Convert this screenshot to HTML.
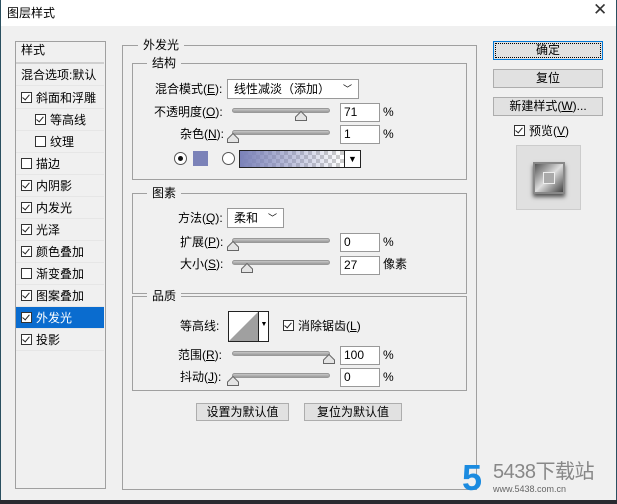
<!DOCTYPE html>
<html><head><meta charset="utf-8"><style>
*{margin:0;padding:0;box-sizing:border-box}
body{width:617px;height:504px;position:relative;overflow:hidden;background:#f0f0f0;font-family:"Liberation Sans","Noto Sans CJK SC",sans-serif;font-size:12px;color:#000}
.a{position:absolute;white-space:nowrap;line-height:14px}
.box{position:absolute;border:1px solid #a0a0a0}
.lg{position:absolute;background:#f0f0f0;padding:0 5px;line-height:14px}
.cb{display:inline-block;width:11px;height:11px;border:1px solid #333;background:#fff;vertical-align:-1px;margin-right:4px;position:relative}
.cb.k::after{content:"";position:absolute;left:2px;top:0px;width:3px;height:6px;border:solid #222;border-width:0 1.5px 1.5px 0;transform:rotate(40deg)}
.row{position:absolute;left:16px;width:88px;height:22px;line-height:22px;border-bottom:1px solid #e6e6e6;padding-left:5px}
.btn{position:absolute;background:#e1e1e1;border:1px solid #adadad;text-align:center;line-height:16px}
.sl{position:absolute;height:5px;background:linear-gradient(#c8c8c8,#9a9a9a);border:1px solid #999;border-radius:3px}
.th{position:absolute;width:12px;height:10px}
.in{position:absolute;width:40px;height:19px;background:#fff;border:1px solid #999;padding-left:3px;line-height:17px}
.sel{position:absolute;background:#fff;border:1px solid #999;height:20px;line-height:18px;padding-left:6px}
</style></head><body>
<svg width="0" height="0" style="position:absolute"><defs><symbol id="t" viewBox="0 0 12 10"><polygon points="6,0.5 11.5,6 11.5,9.5 0.5,9.5 0.5,6" fill="#e4e4e4" stroke="#666"/></symbol></defs></svg>
<div style="position:absolute;left:0;top:0;width:617px;height:26px;background:#fff"></div>
<div style="position:absolute;left:0;top:0;width:1px;height:504px;background:#2a5060"></div>
<div style="position:absolute;left:616px;top:0;width:1px;height:504px;background:#2a5060"></div>
<div class="a" style="left:7px;top:6px">图层样式</div>
<div class="a" style="left:593px;top:3px;font-size:17px;color:#333">✕</div>
<div style="position:absolute;left:0;top:500px;width:617px;height:4px;background:#2a2a30"></div>

<div class="box" style="left:15px;top:41px;width:91px;height:448px;background:#f0f0f0"></div>
<div class="row" style="top:42px;line-height:16px;height:22px;border-bottom:2px solid #cfcfcf">样式</div>
<div class="row" style="top:64px">混合选项:默认</div>
<div class="row" style="top:87px"><span class="cb k"></span>斜面和浮雕</div>
<div class="row" style="top:109px;padding-left:19px"><span class="cb k"></span>等高线</div>
<div class="row" style="top:131px;padding-left:19px"><span class="cb"></span>纹理</div>
<div class="row" style="top:153px"><span class="cb"></span>描边</div>
<div class="row" style="top:175px"><span class="cb k"></span>内阴影</div>
<div class="row" style="top:197px"><span class="cb k"></span>内发光</div>
<div class="row" style="top:219px"><span class="cb k"></span>光泽</div>
<div class="row" style="top:241px"><span class="cb k"></span>颜色叠加</div>
<div class="row" style="top:263px"><span class="cb"></span>渐变叠加</div>
<div class="row" style="top:285px"><span class="cb k"></span>图案叠加</div>
<div class="row" style="top:307px;background:#0a6ccf;color:#fff"><span class="cb k"></span>外发光</div>
<div class="row" style="top:329px"><span class="cb k"></span>投影</div>

<div class="box" style="left:122px;top:45px;width:355px;height:445px"></div>
<div class="lg" style="left:138px;top:38px">外发光</div>
<div class="box" style="left:132px;top:63px;width:335px;height:117px"></div>
<div class="lg" style="left:147px;top:56px">结构</div>
<div class="a" style="left:155px;top:82px">混合模式(<u>E</u>):</div>
<div class="sel" style="left:227px;top:79px;width:132px">线性减淡（添加）<span style="position:absolute;right:6px;top:0;font-size:9px">﹀</span></div>
<div class="a" style="left:154px;top:105px">不透明度(<u>O</u>):</div>
<div class="sl" style="left:232px;top:108px;width:98px"></div><svg class="th" style="left:295px;top:111px"><use href="#t"/></svg>
<div class="in" style="left:340px;top:103px">71</div><div class="a" style="left:383px;top:105px">%</div>
<div class="a" style="left:180px;top:127px">杂色(<u>N</u>):</div>
<div class="sl" style="left:232px;top:130px;width:98px"></div><svg class="th" style="left:227px;top:133px"><use href="#t"/></svg>
<div class="in" style="left:340px;top:125px">1</div><div class="a" style="left:383px;top:127px">%</div>
<div style="position:absolute;left:174px;top:152px;width:13px;height:13px;border:1px solid #555;border-radius:50%;background:#fff"><div style="margin:3px;width:5px;height:5px;border-radius:50%;background:#111"></div></div>
<div style="position:absolute;left:193px;top:151px;width:15px;height:15px;background:#7b82b8"></div>
<div style="position:absolute;left:222px;top:152px;width:13px;height:13px;border:1px solid #555;border-radius:50%;background:#fff"></div>
<div style="position:absolute;left:239px;top:150px;width:122px;height:18px;border:1px solid #222;background:linear-gradient(90deg,#7b82b8,rgba(123,130,184,0) 85%),repeating-conic-gradient(#ccc 0 25%,#fff 0 50%) 0 0/8px 8px"><div style="position:absolute;right:0;top:0;width:16px;height:16px;background:#fff;border-left:1px solid #222;text-align:center;font-size:9px;line-height:16px">▼</div></div>

<div class="box" style="left:132px;top:193px;width:335px;height:101px"></div>
<div class="lg" style="left:147px;top:186px">图素</div>
<div class="a" style="left:178px;top:211px">方法(<u>Q</u>):</div>
<div class="sel" style="left:227px;top:208px;width:57px">柔和<span style="position:absolute;right:6px;top:0;font-size:9px">﹀</span></div>
<div class="a" style="left:180px;top:235px">扩展(<u>P</u>):</div>
<div class="sl" style="left:232px;top:238px;width:98px"></div><svg class="th" style="left:227px;top:241px"><use href="#t"/></svg>
<div class="in" style="left:340px;top:233px">0</div><div class="a" style="left:383px;top:235px">%</div>
<div class="a" style="left:180px;top:257px">大小(<u>S</u>):</div>
<div class="sl" style="left:232px;top:260px;width:98px"></div><svg class="th" style="left:241px;top:263px"><use href="#t"/></svg>
<div class="in" style="left:340px;top:256px">27</div><div class="a" style="left:383px;top:257px">像素</div>

<div class="box" style="left:132px;top:296px;width:335px;height:95px"></div>
<div class="lg" style="left:147px;top:289px">品质</div>
<div class="a" style="left:180px;top:319px">等高线:</div>
<div style="position:absolute;left:228px;top:311px;width:41px;height:31px;border:1px solid #222;background:#fff;overflow:hidden"><svg width="29" height="29" style="position:absolute;left:0;top:0"><polygon points="0,29 29,0 29,29" fill="#a0a0a0"/></svg><div style="position:absolute;left:29px;top:0;width:11px;height:29px;border-left:1px solid #222;font-size:7px;line-height:26px;text-align:center">▼</div></div>
<div class="a" style="left:283px;top:319px"><span class="cb k"></span>消除锯齿(<u>L</u>)</div>
<div class="a" style="left:178px;top:348px">范围(<u>R</u>):</div>
<div class="sl" style="left:232px;top:351px;width:98px"></div><svg class="th" style="left:323px;top:354px"><use href="#t"/></svg>
<div class="in" style="left:340px;top:346px">100</div><div class="a" style="left:383px;top:348px">%</div>
<div class="a" style="left:180px;top:370px">抖动(<u>J</u>):</div>
<div class="sl" style="left:232px;top:373px;width:98px"></div><svg class="th" style="left:227px;top:376px"><use href="#t"/></svg>
<div class="in" style="left:340px;top:368px">0</div><div class="a" style="left:383px;top:370px">%</div>

<div class="btn" style="left:196px;top:403px;width:93px;height:18px">设置为默认值</div>
<div class="btn" style="left:304px;top:403px;width:98px;height:18px">复位为默认值</div>

<div class="btn" style="left:493px;top:41px;width:110px;height:19px;border:1px solid #0078d7;outline:1px dotted #000;outline-offset:-3px">确定</div>
<div class="btn" style="left:493px;top:69px;width:110px;height:19px">复位</div>
<div class="btn" style="left:493px;top:97px;width:110px;height:19px">新建样式(<u>W</u>)...</div>
<div class="a" style="left:514px;top:124px"><span class="cb k"></span>预览(<u>V</u>)</div>
<div style="position:absolute;left:516px;top:145px;width:65px;height:65px;background:#e0e0e0;border:1px solid #ccc"><div style="position:absolute;left:16px;top:16px;width:32px;height:32px;background:linear-gradient(135deg,#555,#ddd 50%,#444);border:2px solid #888;box-shadow:0 3px 4px #555"><div style="margin:8px;width:12px;height:12px;background:#aaa;border:1px solid #eee"></div></div></div>

<div class="a" style="left:462px;top:460px;font-size:36px;line-height:36px;font-weight:bold;color:#1b8be0">5</div>
<div class="a" style="left:493px;top:462px;font-size:20px;line-height:20px;color:#888;letter-spacing:-0.5px">5438下载站</div>
<div class="a" style="left:493px;top:484px;font-size:9px;line-height:10px;color:#666">www.5438.com.cn</div>
</body></html>
